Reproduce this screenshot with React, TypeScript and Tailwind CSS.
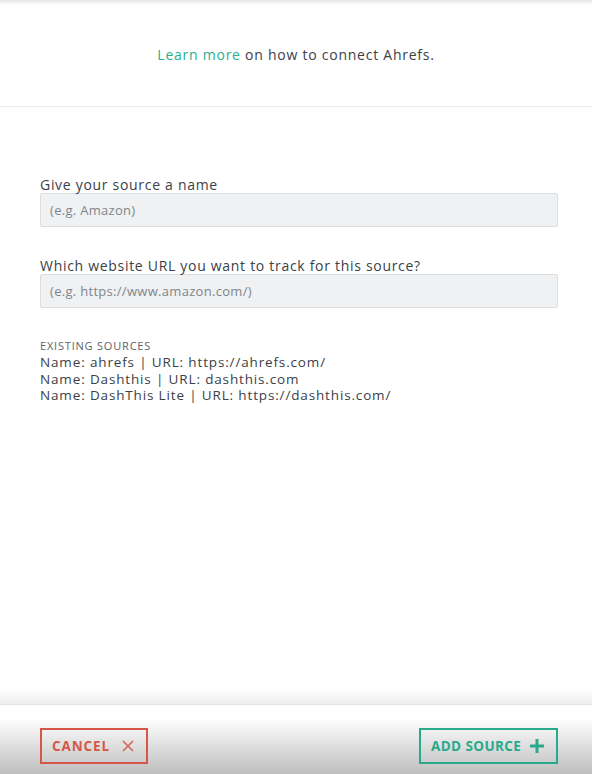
import React from 'react';

const font = { fontFamily: '"Open Sans", "Noto Sans", sans-serif' };

const App = () => {
  return (
    <div className="relative flex h-[774px] w-[592px] flex-col overflow-hidden bg-white text-[#3b4148]" style={font}>
      {/* top shadow */}
      <div className="h-[5px] bg-gradient-to-b from-[#e6e6e6] to-white" />

      <div className="flex h-[102px] items-center justify-center border-b border-[#ececec] pb-[2px] text-[14px] tracking-[0.75px]">
        <p>
          <a className="text-[#2bb08c]">Learn more</a> on how to connect Ahrefs.
        </p>
      </div>

      <div className="flex-1 pl-[40px] pr-[34px] pt-[70px]">
        <label className="block text-[14px] leading-[16px] tracking-[0.7px]">Give your source a name</label>
        <input
          className="block h-[34px] w-full rounded-[2px] border border-[#dadee0] bg-[#eff1f2] px-[9px] text-[13px] tracking-[0.3px] outline-none placeholder:text-[#80868b]"
          placeholder="(e.g. Amazon)"
        />

        <label className="mt-[31px] block text-[14px] leading-[16px] tracking-[0.7px]">
          Which website URL you want to track for this source?
        </label>
        <input
          className="block h-[34px] w-full rounded-[2px] border border-[#dadee0] bg-[#eff1f2] px-[9px] text-[13px] tracking-[0.3px] outline-none placeholder:text-[#80868b]"
          placeholder="(e.g. https://www.amazon.com/)"
        />

        <div className="mt-[31px] text-[11px] uppercase leading-[14px] tracking-[0.8px] text-[#5d6369]">Existing sources</div>
        <ul className="mt-[1px] text-[13.5px] leading-[16.5px] tracking-[0.85px]">
          <li>Name: ahrefs | URL: https://ahrefs.com/</li>
          <li>Name: Dashthis | URL: dashthis.com</li>
          <li>Name: DashThis Lite | URL: https://dashthis.com/</li>
        </ul>
      </div>

      {/* footer */}
      <div className="h-[15px] bg-gradient-to-b from-white to-[#eeeeee]" />
      <div className="h-[1px] bg-[#e4e4e4]" />
      <div className="flex h-[69px] items-start justify-between bg-gradient-to-b from-white from-[20%] to-[#bebebe] pl-[40px] pr-[34px] pt-[23px]">
        <button className="flex h-[36px] w-[108px] items-center gap-[12px] border-2 border-[#d4574a] px-[10px] text-[13.5px] font-bold tracking-[0.9px] text-[#d4574a]">
          CANCEL
          <svg width="12" height="12" viewBox="0 0 12 12" fill="none" stroke="currentColor" strokeWidth="1.4">
            <path d="M1 1l10 10M11 1L1 11" />
          </svg>
        </button>
        <button className="flex h-[36px] w-[139px] items-center gap-[8px] border-2 border-[#2aaa8c] px-[10px] text-[13.5px] font-bold tracking-[0.4px] text-[#2aaa8c]">
          ADD SOURCE
          <svg width="16" height="16" viewBox="0 0 16 16" fill="none" stroke="currentColor" strokeWidth="3">
            <path d="M8 1v14M1 8h14" />
          </svg>
        </button>
      </div>
    </div>
  );
};

export default App;
